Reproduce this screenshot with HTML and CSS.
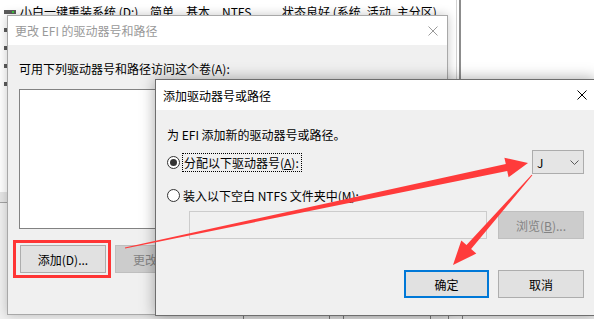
FILE: index.html
```html
<!DOCTYPE html>
<html lang="zh-CN">
<head>
<meta charset="utf-8">
<title>添加驱动器号或路径</title>
<link rel="stylesheet" href="styles.css">
</head>
<body>
<div class="bgwin">
  <div class="top">
    <div class="list">
      <div class="row">
        <span class="drive"><i></i></span>
        <span class="c1">小白一键重装系统 (D:)</span>
        <span class="c2">简单</span>
        <span class="c3">基本</span>
        <span class="c4">NTFS</span>
        <span class="c5">状态良好 (系统, 活动, 主分区)</span>
      </div>
      <div class="row"><span class="drive"></span></div>
      <div class="row"><span class="drive"></span></div>
      <div class="row"><span class="drive"></span></div>
      <div class="row"><span class="drive"></span></div>
    </div>
    <div class="splitter"></div>
    <div class="rest"></div>
  </div>
  <div class="hscroll"></div>
  <div class="graph">
    <div class="segs">
      <span class="seg s0"></span>
      <span class="seg s1"></span>
      <span class="seg s2"></span>
      <span class="seg s3"></span>
      <span class="seg s4"></span>
      <span class="seg s5"></span>
      <span class="seg s6"></span>
    </div>
  </div>
</div>

<div class="dlg dlg1">
  <div class="title inactive">
    <span>更改 EFI 的驱动器号和路径</span>
    <svg class="close" width="10" height="10" viewBox="0 0 10 10"><path d="M0.5 0.5L9.5 9.5M9.5 0.5L0.5 9.5" stroke="#9a9a9a" stroke-width="1" fill="none"/></svg>
  </div>
  <div class="body body1">
    <div class="label">可用下列驱动器号和路径访问这个卷(A):</div>
    <div class="listbox"></div>
    <div class="btnrow1">
      <span class="btn">添加(D)...</span>
      <span class="btn disabled">更改(C)...</span>
      <span class="btn disabled">删除(R)</span>
    </div>
  </div>
</div>

<div class="dlg dlg2">
  <div class="title">
    <span>添加驱动器号或路径</span>
    <svg class="close close2" width="10" height="10" viewBox="0 0 10 10"><path d="M0.5 0.5L9.5 9.5M9.5 0.5L0.5 9.5" stroke="#000" stroke-width="1" fill="none"/></svg>
  </div>
  <div class="body body2">
    <div class="desc">为 EFI 添加新的驱动器号或路径。</div>
    <div class="opt1">
      <span class="radio checked"></span>
      <span class="focus">分配以下驱动器号(<u>A</u>):</span>
      <span class="combo"><span class="cval">J</span><svg width="9" height="5" viewBox="0 0 9 5"><path d="M0.5 0.5L4.5 4.5L8.5 0.5" stroke="#5a5a5a" fill="none"/></svg></span>
    </div>
    <div class="opt2">
      <span class="radio"></span>
      <span>装入以下空白 NTFS 文件夹中(<u>M</u>):</span>
    </div>
    <div class="pathrow">
      <span class="pathbox"></span>
      <span class="btn disabled browse">浏览(<u>B</u>)...</span>
    </div>
    <div class="btnrow2">
      <span class="btn ok">确定</span>
      <span class="btn cancel">取消</span>
    </div>
  </div>
</div>

<svg class="marks" width="594" height="319" viewBox="0 0 594 319">
  <rect x="14.5" y="241.5" width="95" height="35" fill="none" stroke="#ff3535" stroke-width="3"/>
  <polygon fill="#ff3b3b" points="124.9,247.5 505.8,164.1 504.4,157.7 528,163 508.6,177.3 507.2,170.9 125.1,248.5"/>
  <polygon fill="#ff3b3b" points="531.6,174.7 466.5,245 461.3,240.4 453,265 476.3,253.6 471.1,249 532.4,175.3"/>
</svg>
</body>
</html>
```

FILE: styles.css
```css
html, body {
  margin: 0;
  padding: 0;
}
body {
  width: 594px;
  height: 319px;
  overflow: hidden;
  position: relative;
  background: #fff;
  color: #000;
  font-family: "Noto Sans CJK SC", "Microsoft YaHei", sans-serif;
  font-size: 12px;
}

/* background window */
.bgwin {
  position: absolute;
  inset: 0;
  display: flex;
  flex-direction: column;
}
.top {
  height: 192px;
  display: flex;
}
.list {
  width: 456px;
  padding-top: 3px;
}
.row {
  height: 18px;
  display: flex;
  align-items: center;
  white-space: nowrap;
  line-height: 18px;
}
.drive {
  width: 12px;
  height: 4px;
  margin: 0 4px;
  background: #5c5c5c;
  position: relative;
  flex: none;
}
.drive i {
  position: absolute;
  left: 8px;
  top: 1px;
  width: 2px;
  height: 2px;
  background: #3cc83c;
}
.c1 { width: 130px; }
.c2 { width: 36px; }
.c3 { width: 36px; }
.c4 { width: 60px; }
.splitter {
  width: 2px;
  border-left: 1px solid #d2d2d2;
  border-right: 2px solid #8c8c8c;
}
.rest { flex: 1; }
.hscroll {
  height: 10px;
  background: #e6e6e6;
  border-bottom: 1px solid #a3a3a3;
}
.graph {
  flex: 1;
  background: #f0f0f0;
  display: flex;
  flex-direction: column;
  justify-content: flex-end;
}
.segs {
  height: 20px;
  display: flex;
}
.seg { height: 100%; }
.s0 { width: 243px; }
.s1 { width: 85px; border-left: 1px solid #808080; }
.s2 { width: 13px; border-left: 1px solid #808080; }
.s3 { width: 86px; border-left: 1px solid #808080; }
.s4 { width: 17px; border-left: 1px solid #808080; }
.s5 { width: 13px; border-left: 1px solid #808080; }
.s6 { flex: 1; border-left: 1px solid #808080; }

/* dialogs */
.dlg {
  position: absolute;
  box-sizing: border-box;
  background: #f0f0f0;
  display: flex;
  flex-direction: column;
}
.dlg1 {
  left: 7px;
  top: 15px;
  width: 441px;
  height: 300px;
  border: 1px solid #a8a8a8;
  box-shadow: 0 0 10px rgba(0, 0, 0, 0.22);
}
.dlg2 {
  left: 155px;
  top: 79px;
  width: 441px;
  height: 237px;
  border: 1px solid #6e6e6e;
  box-shadow: 0 0 14px rgba(0, 0, 0, 0.35);
}
.title {
  background: #fff;
  display: flex;
  align-items: center;
  padding-left: 7px;
  white-space: nowrap;
  flex: none;
}
.dlg1 .title { height: 29px; }
.dlg2 .title { height: 30px; }
.title.inactive { color: #999; }
.close {
  margin-left: auto;
  margin-right: 9px;
}
.close2 { margin-right: 8px; }

.body {
  display: flex;
  flex-direction: column;
  white-space: nowrap;
}
.body1 { padding: 16px 11px 0 11px; }
.label { line-height: 16px; height: 16px; }
.listbox {
  margin-top: 12px;
  height: 140px;
  width: 417px;
  box-sizing: border-box;
  border: 1px solid #828282;
  background: #fff;
}
.btnrow1 {
  margin-top: 16px;
  padding-left: 1px;
  display: flex;
  gap: 9px;
}

.btn {
  width: 86px;
  height: 28px;
  box-sizing: border-box;
  border: 1px solid #adadad;
  background: #e1e1e1;
  display: flex;
  align-items: center;
  justify-content: center;
  flex: none;
}
.btn.disabled {
  background: #cccccc;
  border-color: #bfbfbf;
  color: #838383;
}

.body2 { padding: 17px 11px 0 11px; }
.desc { line-height: 16px; height: 16px; }
.opt1 {
  margin-top: 7px;
  height: 24px;
  display: flex;
  align-items: center;
}
.opt2 {
  margin-top: 13px;
  height: 16px;
  display: flex;
  align-items: center;
}
.radio {
  width: 13px;
  height: 13px;
  box-sizing: border-box;
  border: 1px solid #333;
  border-radius: 50%;
  background: #fff;
  flex: none;
  position: relative;
  margin-right: 3px;
}
.opt1 .radio { margin-right: 2px; }
.radio.checked::after {
  content: "";
  position: absolute;
  left: 2px;
  top: 2px;
  width: 7px;
  height: 7px;
  border-radius: 50%;
  background: #333;
}
.focus {
  border: 1px dotted #000;
  padding: 0 2px 0 1px;
  line-height: 17px;
}
.combo {
  margin-left: auto;
  width: 52px;
  height: 24px;
  box-sizing: border-box;
  border: 1px solid #acacac;
  background: #e5e5e5;
  display: flex;
  align-items: center;
  padding: 0 4px 0 4px;
}
.cval { flex: 1; }
.pathrow {
  margin-top: 8px;
  height: 28px;
  display: flex;
}
.pathbox {
  margin-left: 22px;
  width: 298px;
  height: 28px;
  box-sizing: border-box;
  border: 1px solid #cccccc;
  background: #f0f0f0;
}
.browse { margin-left: auto; }
.btnrow2 {
  margin-top: 31px;
  display: flex;
  justify-content: flex-end;
  gap: 9px;
}
.btn.ok {
  width: 85px;
  border: 2px solid #0078d7;
}

.marks {
  position: absolute;
  left: 0;
  top: 0;
  pointer-events: none;
}
```
